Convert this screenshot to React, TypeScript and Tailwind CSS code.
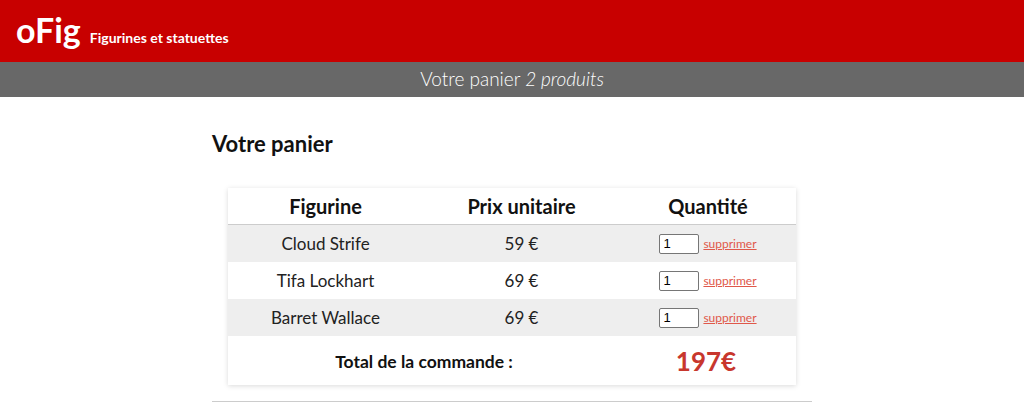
const rows = [
  { name: "Cloud Strife", price: "59 €" },
  { name: "Tifa Lockhart", price: "69 €" },
  { name: "Barret Wallace", price: "69 €" },
];

export default function App() {
  return (
    <div className="min-h-[412px] bg-white text-[#111] font-['Lato','Open_Sans',sans-serif]">
      <header className="h-[62px] bg-[#c80000] text-white flex items-end px-4 pb-[15px]">
        <span className="text-[34px] font-bold leading-none">oFig</span>
        <span className="ml-[9px] mb-[2px] text-[14px] font-bold leading-none">Figurines et statuettes</span>
      </header>
      <div className="h-[35px] bg-[#686868] text-white flex items-center justify-center text-[19px] font-light">
        Votre panier&nbsp;<em>2 produits</em>
      </div>
      <main className="w-[600px] mx-auto">
        <h2 className="mt-[36px] text-[22px] font-bold leading-none">Votre panier</h2>
        <div className="mt-[33px] mx-4 bg-white shadow-[0_1px_5px_rgba(0,0,0,0.15)]">
          <div className="flex h-[37px] items-center border-b border-[#ccc] text-[20px] font-bold">
            <div className="w-[195px] text-center">Figurine</div>
            <div className="w-[197px] text-center">Prix unitaire</div>
            <div className="flex-1 text-center">Quantité</div>
          </div>
          {rows.map((r, i) => (
            <div
              key={r.name}
              className={`flex h-[37px] items-center text-[17px] text-[#222] ${i % 2 === 0 ? "bg-[#eee]" : "bg-white"}`}
            >
              <div className="w-[195px] text-center">{r.name}</div>
              <div className="w-[197px] text-center">{r.price}</div>
              <div className="flex-1 flex items-center justify-center gap-1">
                <input
                  defaultValue="1"
                  className="w-[40px] h-[20px] border border-[#767676] rounded-[2px] bg-white px-[3px] text-[13px] font-['Liberation_Sans',sans-serif] text-black"
                />
                <a href="#" className="text-[12px] text-[#e0584a] underline">supprimer</a>
              </div>
            </div>
          ))}
          <div className="flex h-[49px] items-center">
            <div className="w-[392px] text-center text-[17.5px] font-bold pt-[4px]">Total de la commande :</div>
            <div className="flex-1 text-center text-[26px] font-bold text-[#c8372d] leading-none pr-[4px]">197€</div>
          </div>
        </div>
        <hr className="mt-[16px] border-t border-[#ccc]" />
      </main>
    </div>
  );
}
